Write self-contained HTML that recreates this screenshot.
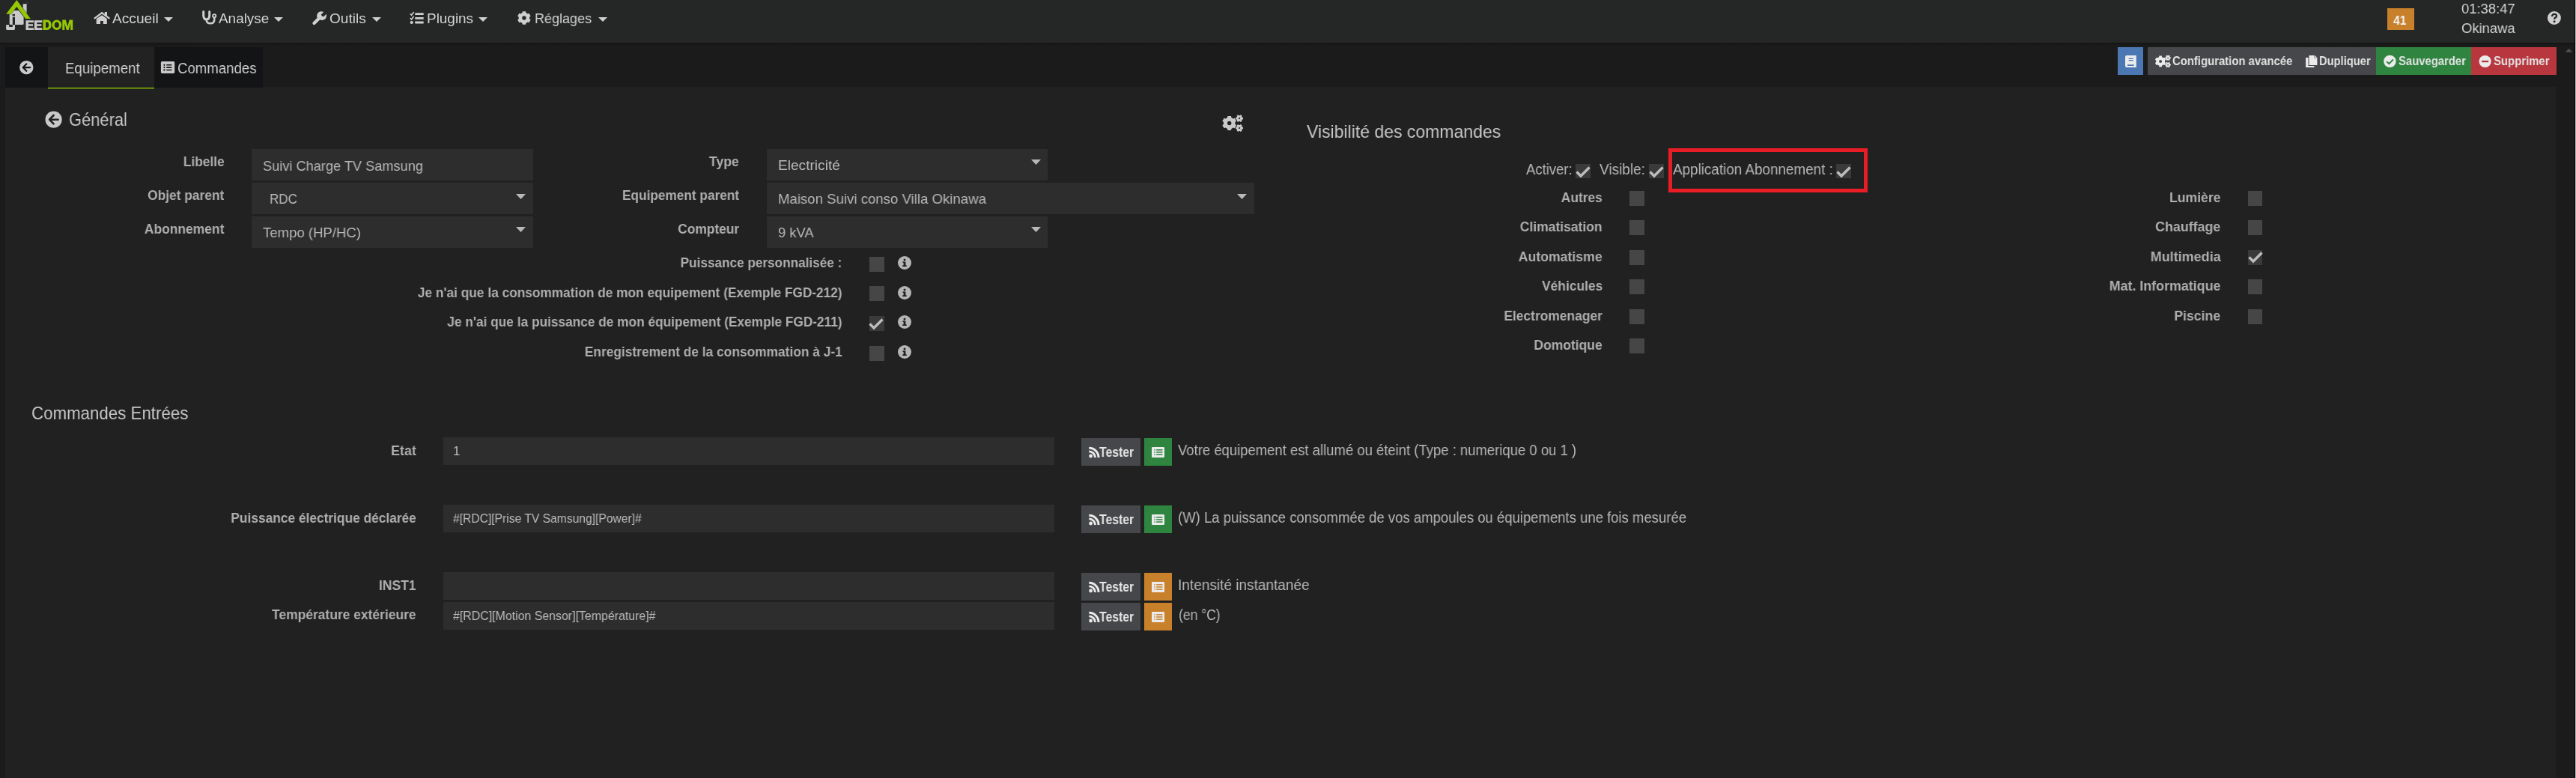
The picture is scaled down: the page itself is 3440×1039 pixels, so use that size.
<!DOCTYPE html>
<html><head><meta charset="utf-8"><style>
html,body{margin:0;padding:0;}
body{width:3440px;height:1039px;overflow:hidden;background:#1b1b1b;position:relative;font-family:"Liberation Sans",sans-serif;}
.t{position:absolute;white-space:nowrap;line-height:1;will-change:transform;}
.b{position:absolute;}
</style></head><body>
<div class="b" style="left:0px;top:0px;width:3440px;height:57px;background:#252626;"></div>
<div class="b" style="left:0px;top:57px;width:3440px;height:4px;background:linear-gradient(#141414,#1b1b1b);"></div>
<div class="b" style="left:7px;top:116px;width:3406px;height:923px;background:#212121;"></div>
<div class="b" style="left:7px;top:63px;width:57px;height:54px;background:#131416;"></div>
<div class="b" style="left:64px;top:63px;width:142px;height:54px;background:#222222;"></div>
<div class="b" style="left:64px;top:117px;width:142px;height:1px;background:#94ca02;"></div>
<div class="b" style="left:64px;top:118px;width:142px;height:1px;background:rgba(148,202,2,0.35);"></div>
<div class="b" style="left:206px;top:63px;width:145px;height:54px;background:#131416;"></div>
<div class="b" style="left:3438px;top:0px;width:1px;height:1039px;background:#000;"></div>
<div class="b" style="left:3439px;top:0px;width:1px;height:1039px;background:#bdbdbd;"></div>
<div class="b" style="left:2828px;top:63px;width:34px;height:37px;background:#4b78b3;"></div>
<div class="b" style="left:2868px;top:63px;width:305px;height:37px;background:#46474a;"></div>
<div class="b" style="left:3173px;top:63px;width:127px;height:37px;background:#2f8440;"></div>
<div class="b" style="left:3300px;top:63px;width:114px;height:37px;background:#b8373e;"></div>
<div class="b" style="left:3188px;top:11px;width:36px;height:29px;background:#c8802b;"></div>
<div class="b" style="left:336px;top:199px;width:376px;height:42px;background:#2d2d2d;"></div>
<div class="b" style="left:336px;top:244px;width:376px;height:42px;background:#2d2d2d;"></div>
<div class="b" style="left:336px;top:289px;width:376px;height:42px;background:#2d2d2d;"></div>
<div class="b" style="left:1024px;top:199px;width:375px;height:42px;background:#2d2d2d;"></div>
<div class="b" style="left:1024px;top:244px;width:651px;height:42px;background:#2d2d2d;"></div>
<div class="b" style="left:1024px;top:289px;width:375px;height:42px;background:#2d2d2d;"></div>
<div class="b" style="left:1161px;top:343px;width:20px;height:20px;background:#464646;"></div>
<div class="b" style="left:1161px;top:382px;width:20px;height:20px;background:#464646;"></div>
<div class="b" style="left:1161px;top:422px;width:20px;height:20px;background:#3a3a3a;"></div>
<div class="b" style="left:1161px;top:462px;width:20px;height:20px;background:#464646;"></div>
<div class="b" style="left:2104px;top:219px;width:20px;height:19px;background:#3a3a3a;"></div>
<div class="b" style="left:2202px;top:219px;width:20px;height:19px;background:#3a3a3a;"></div>
<div class="b" style="left:2452px;top:219px;width:20px;height:19px;background:#3a3a3a;"></div>
<div class="b" style="left:2176px;top:255px;width:20px;height:20px;background:#464646;"></div>
<div class="b" style="left:2176px;top:294px;width:20px;height:20px;background:#464646;"></div>
<div class="b" style="left:2176px;top:334px;width:20px;height:20px;background:#464646;"></div>
<div class="b" style="left:2176px;top:373px;width:20px;height:20px;background:#464646;"></div>
<div class="b" style="left:2176px;top:413px;width:20px;height:20px;background:#464646;"></div>
<div class="b" style="left:2176px;top:452px;width:20px;height:20px;background:#464646;"></div>
<div class="b" style="left:3002px;top:255px;width:19px;height:20px;background:#464646;"></div>
<div class="b" style="left:3002px;top:294px;width:19px;height:20px;background:#464646;"></div>
<div class="b" style="left:3002px;top:334px;width:19px;height:20px;background:#3a3a3a;"></div>
<div class="b" style="left:3002px;top:373px;width:19px;height:20px;background:#464646;"></div>
<div class="b" style="left:3002px;top:413px;width:19px;height:20px;background:#464646;"></div>
<div class="b" style="left:2228px;top:198px;width:256px;height:49px;border:5px solid #e81d25"></div>
<div class="b" style="left:592px;top:584px;width:816px;height:37px;background:#2d2d2d;"></div>
<div class="b" style="left:592px;top:674px;width:816px;height:37px;background:#2d2d2d;"></div>
<div class="b" style="left:592px;top:764px;width:816px;height:37px;background:#2d2d2d;"></div>
<div class="b" style="left:592px;top:804px;width:816px;height:37px;background:#2d2d2d;"></div>
<div class="b" style="left:1444px;top:585px;width:79px;height:37px;background:#46474a;"></div>
<div class="b" style="left:1528px;top:585px;width:37px;height:37px;background:#2f8440;"></div>
<div class="b" style="left:1444px;top:675px;width:79px;height:37px;background:#46474a;"></div>
<div class="b" style="left:1528px;top:675px;width:37px;height:37px;background:#2f8440;"></div>
<div class="b" style="left:1444px;top:765px;width:79px;height:37px;background:#46474a;"></div>
<div class="b" style="left:1528px;top:765px;width:37px;height:37px;background:#c8802b;"></div>
<div class="b" style="left:1444px;top:805px;width:79px;height:37px;background:#46474a;"></div>
<div class="b" style="left:1528px;top:805px;width:37px;height:37px;background:#c8802b;"></div>
<svg class="b" style="left:219px;top:23px;" width="12" height="6" viewBox="0 0 12 6"><path d="M0 0H12L6.0 6Z" fill="#cfcfcf"/></svg>
<svg class="b" style="left:366px;top:23px;" width="12" height="6" viewBox="0 0 12 6"><path d="M0 0H12L6.0 6Z" fill="#cfcfcf"/></svg>
<svg class="b" style="left:497px;top:23px;" width="12" height="6" viewBox="0 0 12 6"><path d="M0 0H12L6.0 6Z" fill="#cfcfcf"/></svg>
<svg class="b" style="left:639px;top:23px;" width="12" height="6" viewBox="0 0 12 6"><path d="M0 0H12L6.0 6Z" fill="#cfcfcf"/></svg>
<svg class="b" style="left:798.5px;top:23px;" width="12.0" height="6" viewBox="0 0 12.0 6"><path d="M0 0H12.0L6.0 6Z" fill="#cfcfcf"/></svg>
<svg class="b" style="left:689px;top:259px;" width="13" height="7" viewBox="0 0 13 7"><path d="M0 0H13L6.5 7Z" fill="#b8b8b8"/></svg>
<svg class="b" style="left:689px;top:303px;" width="13" height="7" viewBox="0 0 13 7"><path d="M0 0H13L6.5 7Z" fill="#b8b8b8"/></svg>
<svg class="b" style="left:1377px;top:213px;" width="13" height="7" viewBox="0 0 13 7"><path d="M0 0H13L6.5 7Z" fill="#b8b8b8"/></svg>
<svg class="b" style="left:1652px;top:259px;" width="13" height="7" viewBox="0 0 13 7"><path d="M0 0H13L6.5 7Z" fill="#b8b8b8"/></svg>
<svg class="b" style="left:1377px;top:302.5px;" width="13" height="7.0" viewBox="0 0 13 7.0"><path d="M0 0H13L6.5 7.0Z" fill="#b8b8b8"/></svg>
<svg class="b" style="left:1160px;top:422px;" width="20" height="20" viewBox="0 0 20 20"><path d="M1.5 10.5L7 16L18.5 4.5" stroke="#bdbdbd" stroke-width="3.4" fill="none"/></svg>
<svg class="b" style="left:2104px;top:219px;" width="20" height="20" viewBox="0 0 20 20"><path d="M1.5 10.5L7 16L18.5 4.5" stroke="#bdbdbd" stroke-width="3.4" fill="none"/></svg>
<svg class="b" style="left:2202px;top:219px;" width="20" height="20" viewBox="0 0 20 20"><path d="M1.5 10.5L7 16L18.5 4.5" stroke="#bdbdbd" stroke-width="3.4" fill="none"/></svg>
<svg class="b" style="left:2452px;top:219px;" width="20" height="20" viewBox="0 0 20 20"><path d="M1.5 10.5L7 16L18.5 4.5" stroke="#bdbdbd" stroke-width="3.4" fill="none"/></svg>
<svg class="b" style="left:3002px;top:333px;" width="20" height="20" viewBox="0 0 20 20"><path d="M1.5 10.5L7 16L18.5 4.5" stroke="#bdbdbd" stroke-width="3.4" fill="none"/></svg>
<svg class="b" style="left:1198.5px;top:342.3px;" width="18" height="18" viewBox="0 0 18 18"><circle cx="9" cy="9" r="9" fill="#b5b5b5"/><rect x="7.6" y="7.5" width="2.8" height="6.5" fill="#222"/><rect x="6.3" y="12.3" width="5.4" height="1.7" fill="#222"/><rect x="6.5" y="7.5" width="2" height="1.5" fill="#222"/><circle cx="9" cy="5" r="1.5" fill="#222"/></svg>
<svg class="b" style="left:1198.5px;top:381.8px;" width="18" height="18" viewBox="0 0 18 18"><circle cx="9" cy="9" r="9" fill="#b5b5b5"/><rect x="7.6" y="7.5" width="2.8" height="6.5" fill="#222"/><rect x="6.3" y="12.3" width="5.4" height="1.7" fill="#222"/><rect x="6.5" y="7.5" width="2" height="1.5" fill="#222"/><circle cx="9" cy="5" r="1.5" fill="#222"/></svg>
<svg class="b" style="left:1198.5px;top:421.3px;" width="18" height="18" viewBox="0 0 18 18"><circle cx="9" cy="9" r="9" fill="#b5b5b5"/><rect x="7.6" y="7.5" width="2.8" height="6.5" fill="#222"/><rect x="6.3" y="12.3" width="5.4" height="1.7" fill="#222"/><rect x="6.5" y="7.5" width="2" height="1.5" fill="#222"/><circle cx="9" cy="5" r="1.5" fill="#222"/></svg>
<svg class="b" style="left:1198.5px;top:460.8px;" width="18" height="18" viewBox="0 0 18 18"><circle cx="9" cy="9" r="9" fill="#b5b5b5"/><rect x="7.6" y="7.5" width="2.8" height="6.5" fill="#222"/><rect x="6.3" y="12.3" width="5.4" height="1.7" fill="#222"/><rect x="6.5" y="7.5" width="2" height="1.5" fill="#222"/><circle cx="9" cy="5" r="1.5" fill="#222"/></svg><svg class="b" style="left:0;top:0" width="3440" height="1039"><rect x="30.7" y="5.2" width="4.9" height="12" fill="#c9c9c9"/>
<path d="M12.7 15.5 Q12.7 13.9 14.3 13.9 H25 L31.6 22.5 V31.4 Q31.6 33 30 33 H14.3 Q12.7 33 12.7 31.4Z" fill="#c9c9c9"/>
<path d="M8.1 18.8 L22.3 0 L40.8 24.9 L34.1 24.9 L22.3 9 L14.7 18.8Z" fill="#94c802" stroke="#252626" stroke-width="0.7" paint-order="stroke"/>
<rect x="16.6" y="18.9" width="3.4" height="2.4" fill="#252626"/>
<rect x="16.8" y="22.8" width="3.2" height="11.5" fill="#252626"/>
<path d="M8.1 33.3 H12.2 V35.9 H16.8 V33.3 H20 V38.6 Q20 39.9 18.7 39.9 H9.4 Q8.1 39.9 8.1 38.6Z" fill="#c9c9c9"/>
<path d="M34.5 27.2 H45.0 V29.9 H37.9 V32.2 H44.0 V34.8 H37.9 V37.2 H45.0 V39.9 H34.5Z" fill="#c9c9c9"/>
<path d="M45.9 27.2 H56.4 V29.9 H49.3 V32.2 H55.4 V34.8 H49.3 V37.2 H56.4 V39.9 H45.9Z" fill="#c9c9c9"/>
<path fill-rule="evenodd" d="M57.5 26.6 H62.6 Q68.6 26.6 68.6 33.3 Q68.6 40 62.6 40 H57.5Z M61 29.5 H62.4 Q65.1 29.5 65.1 33.3 Q65.1 37.1 62.4 37.1 H61Z" fill="#94c802"/>
<path fill-rule="evenodd" d="M75.8 26.4 A6.4 6.85 0 1 1 75.8 40.1 A6.4 6.85 0 1 1 75.8 26.4Z M75.8 29.4 A3.1 3.85 0 1 0 75.8 37.1 A3.1 3.85 0 1 0 75.8 29.4Z" fill="#94c802"/>
<path d="M83.3 40 V26.6 H87.8 L90.25 35.2 L92.7 26.6 H97.2 V40 H94.2 V31.2 L91.6 40 H88.9 L86.3 31.2 V40Z" fill="#94c802"/>
<path d="M35.3 2 L37.6 4.2 L36.6 5" stroke="#555" stroke-width="0.8" fill="none"/>
<path d="M125.8 24.9 L136.1 17.1 L146.4 24.9" stroke="#cfcfcf" stroke-width="2.3" fill="none" stroke-linejoin="miter"/>
<rect x="139.8" y="16" width="3.2" height="5.2" fill="#cfcfcf"/>
<path d="M128.7 25.1 L136.1 20.2 L142.8 25.1 V32.1 H137.9 V27.9 H134 V32.1 H128.7Z" fill="#cfcfcf"/>
<path d="M271.7 15.6 V20.6 Q271.7 25.9 275.7 25.9 Q279.7 25.9 279.7 20.6 V15.6" stroke="#cfcfcf" stroke-width="3" fill="none" stroke-linecap="round"/>
<path d="M275.7 25.5 V26.5 Q275.7 31.3 280.9 31.3 Q286.2 31.3 286.2 26.5 V23.3" stroke="#cfcfcf" stroke-width="2.6" fill="none"/>
<circle cx="286.2" cy="21.2" r="2.1" stroke="#cfcfcf" stroke-width="1.9" fill="none"/>
<path d="M419.5 31 L427 23.5" stroke="#cfcfcf" stroke-width="4.4" stroke-linecap="round"/>
<path d="M425.8 26.2 A6 6 0 0 1 430.5 15.4 L432.3 15.9 L428.8 19.5 L429.9 21.5 L432.3 22.3 L435.7 18.8 Q436.5 21.5 435.3 24 A6 6 0 0 1 428.6 26.8Z" fill="#cfcfcf"/>
<rect x="554.2" y="17.15" width="11.5" height="2.9" rx="0.6" fill="#cfcfcf"/>
<rect x="554.2" y="22.95" width="11.5" height="2.9" rx="0.6" fill="#cfcfcf"/>
<rect x="554.2" y="28.55" width="11.5" height="2.9" rx="0.6" fill="#cfcfcf"/>
<path d="M547.8 18.3 L549.5 20.2 L552.6 16.0" stroke="#cfcfcf" stroke-width="1.6" fill="none"/>
<path d="M547.8 24.1 L549.5 26.0 L552.6 21.8" stroke="#cfcfcf" stroke-width="1.6" fill="none"/>
<circle cx="549.7" cy="30" r="2.1" fill="#cfcfcf"/>
<path fill-rule="evenodd" d="M697.50 17.11 L697.73 15.16 L702.07 15.16 L702.30 17.11 L704.67 18.47 L706.47 17.70 L708.64 21.46 L707.07 22.63 L707.07 25.37 L708.64 26.54 L706.47 30.30 L704.67 29.53 L702.30 30.89 L702.07 32.84 L697.73 32.84 L697.50 30.89 L695.13 29.53 L693.33 30.30 L691.16 26.54 L692.73 25.37 L692.73 22.63 L691.16 21.46 L693.33 17.70 L695.13 18.47Z M702.60 24.00 A2.7 2.7 0 1 0 697.20 24.00 A2.7 2.7 0 1 0 702.60 24.00Z" fill="#cfcfcf"/>
<circle cx="3410.9" cy="24" r="9" fill="#cfcfcf"/>
<path d="M3408 22 Q3408.2 18.8 3411.2 18.8 Q3414.1 18.8 3414.1 21.2 Q3414.1 22.7 3412.3 23.6 Q3411.1 24.3 3411.1 25.8" stroke="#252626" stroke-width="2.3" fill="none"/>
<circle cx="3411.1" cy="28.7" r="1.5" fill="#252626"/>
<circle cx="35.3" cy="90.1" r="9.2" fill="#c9c9c9"/>
<path d="M35.3 85.4 L30.7 90.1 L35.3 94.8 M30.9 90.1 H40.3" stroke="#131416" stroke-width="2.2" fill="none" stroke-linecap="round" stroke-linejoin="round"/>
<rect x="214.9" y="81.9" width="18.3" height="16" rx="1.6" fill="#c9c9c9"/>
<circle cx="219.4" cy="86.8" r="1.15" fill="#131416"/>
<rect x="222.2" y="86.0" width="7.2" height="1.6" rx="0.4" fill="#131416"/>
<circle cx="219.4" cy="90.1" r="1.15" fill="#131416"/>
<rect x="222.2" y="89.3" width="7.2" height="1.6" rx="0.4" fill="#131416"/>
<circle cx="219.4" cy="93.5" r="1.15" fill="#131416"/>
<rect x="222.2" y="92.7" width="7.2" height="1.6" rx="0.4" fill="#131416"/>
<circle cx="71.6" cy="159.7" r="11.1" fill="#c9c9c9"/>
<path d="M71.6 154 L66 159.7 L71.6 165.4 M66.3 159.7 H77.6" stroke="#212121" stroke-width="2.6" fill="none" stroke-linecap="round" stroke-linejoin="round"/>
<path fill-rule="evenodd" d="M1639.10 157.04 L1639.36 154.98 L1644.04 154.98 L1644.30 157.04 L1646.86 158.52 L1648.77 157.72 L1651.11 161.77 L1649.46 163.02 L1649.46 165.98 L1651.11 167.23 L1648.77 171.28 L1646.86 170.48 L1644.30 171.96 L1644.04 174.02 L1639.36 174.02 L1639.10 171.96 L1636.54 170.48 L1634.63 171.28 L1632.29 167.23 L1633.94 165.98 L1633.94 163.02 L1632.29 161.77 L1634.63 157.72 L1636.54 158.52Z M1644.40 164.50 A2.7 2.7 0 1 0 1639.00 164.50 A2.7 2.7 0 1 0 1644.40 164.50Z" fill="#c9c9c9"/>
<path fill-rule="evenodd" d="M1655.87 154.17 L1656.55 153.21 L1658.61 154.40 L1658.11 155.47 L1658.88 156.80 L1660.06 156.91 L1660.06 159.29 L1658.88 159.40 L1658.11 160.73 L1658.61 161.80 L1656.55 162.99 L1655.87 162.03 L1654.33 162.03 L1653.65 162.99 L1651.59 161.80 L1652.09 160.73 L1651.32 159.40 L1650.14 159.29 L1650.14 156.91 L1651.32 156.80 L1652.09 155.47 L1651.59 154.40 L1653.65 153.21 L1654.33 154.17Z M1656.20 158.10 A1.1 1.1 0 1 0 1654.00 158.10 A1.1 1.1 0 1 0 1656.20 158.10Z" fill="#c9c9c9"/>
<path fill-rule="evenodd" d="M1655.87 167.07 L1656.55 166.11 L1658.61 167.30 L1658.11 168.37 L1658.88 169.70 L1660.06 169.81 L1660.06 172.19 L1658.88 172.30 L1658.11 173.63 L1658.61 174.70 L1656.55 175.89 L1655.87 174.93 L1654.33 174.93 L1653.65 175.89 L1651.59 174.70 L1652.09 173.63 L1651.32 172.30 L1650.14 172.19 L1650.14 169.81 L1651.32 169.70 L1652.09 168.37 L1651.59 167.30 L1653.65 166.11 L1654.33 167.07Z M1656.20 171.00 A1.1 1.1 0 1 0 1654.00 171.00 A1.1 1.1 0 1 0 1656.20 171.00Z" fill="#c9c9c9"/>
<path d="M2840 74 H2852.8 V89.9 H2840 Q2838 89.9 2838 88 V76 Q2838 74 2840 74Z" fill="#ebebeb"/>
<rect x="2842.5" y="77.8" width="6.5" height="1.3" rx="0.6" fill="#4b78b3"/>
<rect x="2842.5" y="79.9" width="6.5" height="1.3" rx="0.6" fill="#4b78b3"/>
<rect x="2840.8" y="86.2" width="9.1" height="1.7" rx="0.8" fill="#4b78b3"/>
<path fill-rule="evenodd" d="M2883.13 76.23 L2883.31 74.62 L2886.89 74.62 L2887.07 76.23 L2889.02 77.36 L2890.51 76.71 L2892.30 79.81 L2890.99 80.78 L2890.99 83.02 L2892.30 83.99 L2890.51 87.09 L2889.02 86.44 L2887.07 87.57 L2886.89 89.18 L2883.31 89.18 L2883.13 87.57 L2881.18 86.44 L2879.69 87.09 L2877.90 83.99 L2879.21 83.02 L2879.21 80.78 L2877.90 79.81 L2879.69 76.71 L2881.18 77.36Z M2887.10 81.90 A2.0 2.0 0 1 0 2883.10 81.90 A2.0 2.0 0 1 0 2887.10 81.90Z" fill="#ebebeb"/>
<path fill-rule="evenodd" d="M2895.68 74.36 L2896.21 73.56 L2897.78 74.47 L2897.36 75.33 L2897.94 76.33 L2898.89 76.39 L2898.89 78.21 L2897.94 78.27 L2897.36 79.27 L2897.78 80.13 L2896.21 81.04 L2895.68 80.24 L2894.52 80.24 L2893.99 81.04 L2892.42 80.13 L2892.84 79.27 L2892.26 78.27 L2891.31 78.21 L2891.31 76.39 L2892.26 76.33 L2892.84 75.33 L2892.42 74.47 L2893.99 73.56 L2894.52 74.36Z M2896.00 77.30 A0.9 0.9 0 1 0 2894.20 77.30 A0.9 0.9 0 1 0 2896.00 77.30Z" fill="#ebebeb"/>
<path fill-rule="evenodd" d="M2895.68 83.66 L2896.21 82.86 L2897.78 83.77 L2897.36 84.63 L2897.94 85.63 L2898.89 85.69 L2898.89 87.51 L2897.94 87.57 L2897.36 88.57 L2897.78 89.43 L2896.21 90.34 L2895.68 89.54 L2894.52 89.54 L2893.99 90.34 L2892.42 89.43 L2892.84 88.57 L2892.26 87.57 L2891.31 87.51 L2891.31 85.69 L2892.26 85.63 L2892.84 84.63 L2892.42 83.77 L2893.99 82.86 L2894.52 83.66Z M2896.00 86.60 A0.9 0.9 0 1 0 2894.20 86.60 A0.9 0.9 0 1 0 2896.00 86.60Z" fill="#ebebeb"/>
<path d="M3079.1 76.9 H3082.5 V88 H3090.4 V89.9 H3079.1Z" fill="#ebebeb"/>
<path d="M3083.5 74 H3090.6 V77.6 H3094.4 V87.1 H3083.5Z" fill="#ebebeb"/>
<path d="M3091.4 74 L3094.4 76.9 H3091.4Z" fill="#ebebeb"/>
<circle cx="3191.4" cy="81.9" r="8.2" fill="#ebebeb"/>
<path d="M3187.2 82.2 L3190.4 85.2 L3195.9 79.4" stroke="#2f8440" stroke-width="2" fill="none"/>
<circle cx="3318.6" cy="82" r="8.1" fill="#ebebeb"/>
<rect x="3314" y="80.9" width="9.2" height="2.3" fill="#b8373e"/>
<path d="M3425.6 69.8 L3430.5 64.7 L3435.5 69.8Z" fill="#505050"/>
<path d="M1454.3 601.4 A9.6 9.6 0 0 1 1463.9 611.0 H1461.1 A6.8 6.8 0 0 0 1454.3 604.2Z" fill="#ebebeb"/>
<path d="M1454.3 596.8 A14.2 14.2 0 0 1 1468.5 611.0 H1465.5 A11.2 11.2 0 0 0 1454.3 599.8Z" fill="#ebebeb"/>
<circle cx="1456.6" cy="609" r="2.4" fill="#ebebeb"/>
<rect x="1538" y="597" width="17" height="14" rx="1.2" fill="#ebebeb"/>
<rect x="1541.3" y="600.1" width="1.5" height="1.5" fill="#2f8440"/>
<rect x="1544.2" y="600.1" width="8.3" height="1.5" fill="#2f8440"/>
<rect x="1541.3" y="603.2" width="1.5" height="1.5" fill="#2f8440"/>
<rect x="1544.2" y="603.2" width="8.3" height="1.5" fill="#2f8440"/>
<rect x="1541.3" y="606.3" width="1.5" height="1.5" fill="#2f8440"/>
<rect x="1544.2" y="606.3" width="8.3" height="1.5" fill="#2f8440"/>
<path d="M1454.3 691.4 A9.6 9.6 0 0 1 1463.9 701.0 H1461.1 A6.8 6.8 0 0 0 1454.3 694.2Z" fill="#ebebeb"/>
<path d="M1454.3 686.8 A14.2 14.2 0 0 1 1468.5 701.0 H1465.5 A11.2 11.2 0 0 0 1454.3 689.8Z" fill="#ebebeb"/>
<circle cx="1456.6" cy="699" r="2.4" fill="#ebebeb"/>
<rect x="1538" y="687" width="17" height="14" rx="1.2" fill="#ebebeb"/>
<rect x="1541.3" y="690.1" width="1.5" height="1.5" fill="#2f8440"/>
<rect x="1544.2" y="690.1" width="8.3" height="1.5" fill="#2f8440"/>
<rect x="1541.3" y="693.2" width="1.5" height="1.5" fill="#2f8440"/>
<rect x="1544.2" y="693.2" width="8.3" height="1.5" fill="#2f8440"/>
<rect x="1541.3" y="696.3" width="1.5" height="1.5" fill="#2f8440"/>
<rect x="1544.2" y="696.3" width="8.3" height="1.5" fill="#2f8440"/>
<path d="M1454.3 781.4 A9.6 9.6 0 0 1 1463.9 791.0 H1461.1 A6.8 6.8 0 0 0 1454.3 784.2Z" fill="#ebebeb"/>
<path d="M1454.3 776.8 A14.2 14.2 0 0 1 1468.5 791.0 H1465.5 A11.2 11.2 0 0 0 1454.3 779.8Z" fill="#ebebeb"/>
<circle cx="1456.6" cy="789" r="2.4" fill="#ebebeb"/>
<rect x="1538" y="777" width="17" height="14" rx="1.2" fill="#ebebeb"/>
<rect x="1541.3" y="780.1" width="1.5" height="1.5" fill="#c8802b"/>
<rect x="1544.2" y="780.1" width="8.3" height="1.5" fill="#c8802b"/>
<rect x="1541.3" y="783.2" width="1.5" height="1.5" fill="#c8802b"/>
<rect x="1544.2" y="783.2" width="8.3" height="1.5" fill="#c8802b"/>
<rect x="1541.3" y="786.3" width="1.5" height="1.5" fill="#c8802b"/>
<rect x="1544.2" y="786.3" width="8.3" height="1.5" fill="#c8802b"/>
<path d="M1454.3 821.4 A9.6 9.6 0 0 1 1463.9 831.0 H1461.1 A6.8 6.8 0 0 0 1454.3 824.2Z" fill="#ebebeb"/>
<path d="M1454.3 816.8 A14.2 14.2 0 0 1 1468.5 831.0 H1465.5 A11.2 11.2 0 0 0 1454.3 819.8Z" fill="#ebebeb"/>
<circle cx="1456.6" cy="829" r="2.4" fill="#ebebeb"/>
<rect x="1538" y="817" width="17" height="14" rx="1.2" fill="#ebebeb"/>
<rect x="1541.3" y="820.1" width="1.5" height="1.5" fill="#c8802b"/>
<rect x="1544.2" y="820.1" width="8.3" height="1.5" fill="#c8802b"/>
<rect x="1541.3" y="823.2" width="1.5" height="1.5" fill="#c8802b"/>
<rect x="1544.2" y="823.2" width="8.3" height="1.5" fill="#c8802b"/>
<rect x="1541.3" y="826.3" width="1.5" height="1.5" fill="#c8802b"/>
<rect x="1544.2" y="826.3" width="8.3" height="1.5" fill="#c8802b"/></svg>
<div class="t" style="left:150.04px;top:15.64px;font-size:18.5px;font-weight:400;color:#d4d4d4;transform:scaleX(1.0349);transform-origin:left">Accueil</div>
<div class="t" style="left:292.05px;top:15.64px;font-size:18.5px;font-weight:400;color:#d4d4d4;transform:scaleX(1.0224);transform-origin:left">Analyse</div>
<div class="t" style="left:440.05px;top:15.64px;font-size:18.5px;font-weight:400;color:#d4d4d4;transform:scaleX(1.0300);transform-origin:left">Outils</div>
<div class="t" style="left:569.65px;top:15.64px;font-size:18.5px;font-weight:400;color:#d4d4d4;transform:scaleX(1.0233);transform-origin:left">Plugins</div>
<div class="t" style="left:713.70px;top:15.64px;font-size:18.5px;font-weight:400;color:#d4d4d4;transform:scaleX(0.9725);transform-origin:left">Réglages</div>
<div class="t" style="left:3286.78px;top:3.30px;font-size:18.9px;font-weight:400;color:#d4d4d4;transform:scaleX(0.9743);transform-origin:left">01:38:47</div>
<div class="t" style="left:3287.08px;top:28.80px;font-size:18.9px;font-weight:400;color:#d4d4d4;transform:scaleX(0.9749);transform-origin:left">Okinawa</div>
<div class="t" style="left:3196.22px;top:19.13px;font-size:16.5px;font-weight:700;color:#f2f2f2;transform:scaleX(0.9482);transform-origin:left">41</div>
<div class="t" style="left:87.07px;top:80.67px;font-size:20px;font-weight:400;color:#d0d0d0;transform:scaleX(0.9338);transform-origin:left">Equipement</div>
<div class="t" style="left:237.07px;top:80.67px;font-size:20px;font-weight:400;color:#d0d0d0;transform:scaleX(0.9302);transform-origin:left">Commandes</div>
<div class="t" style="left:2901.26px;top:73.36px;font-size:17.3px;font-weight:700;color:#e4e4e4;transform:scaleX(0.8607);transform-origin:left">Configuration avancée</div>
<div class="t" style="left:3096.96px;top:73.36px;font-size:17.3px;font-weight:700;color:#e4e4e4;transform:scaleX(0.8508);transform-origin:left">Dupliquer</div>
<div class="t" style="left:3203.06px;top:73.36px;font-size:17.3px;font-weight:700;color:#e4e4e4;transform:scaleX(0.8590);transform-origin:left">Sauvegarder</div>
<div class="t" style="left:3330.06px;top:73.36px;font-size:17.3px;font-weight:700;color:#e4e4e4;transform:scaleX(0.8612);transform-origin:left">Supprimer</div>
<div class="t" style="left:91.70px;top:148.15px;font-size:24.4px;font-weight:400;color:#c8c8c8;transform:scaleX(0.8985);transform-origin:left">Général</div>
<div class="t" style="left:1744.55px;top:164.33px;font-size:24.3px;font-weight:400;color:#c8c8c8;transform:scaleX(0.9473);transform-origin:left">Visibilité des commandes</div>
<div class="t" style="right:3140.63px;top:207.30px;font-size:18.9px;font-weight:700;color:#afafaf;transform:scaleX(0.9201);transform-origin:right">Libelle</div>
<div class="t" style="right:2453.12px;top:207.30px;font-size:18.9px;font-weight:700;color:#afafaf;transform:scaleX(0.9317);transform-origin:right">Type</div>
<div class="t" style="right:3140.63px;top:252.30px;font-size:18.9px;font-weight:700;color:#afafaf;transform:scaleX(0.9182);transform-origin:right">Objet parent</div>
<div class="t" style="right:2453.14px;top:252.30px;font-size:18.9px;font-weight:700;color:#afafaf;transform:scaleX(0.9127);transform-origin:right">Equipement parent</div>
<div class="t" style="right:3140.63px;top:297.30px;font-size:18.9px;font-weight:700;color:#afafaf;transform:scaleX(0.9239);transform-origin:right">Abonnement</div>
<div class="t" style="right:2453.13px;top:297.30px;font-size:18.9px;font-weight:700;color:#afafaf;transform:scaleX(0.9198);transform-origin:right">Compteur</div>
<div class="t" style="left:351.09px;top:211.62px;font-size:19px;font-weight:400;color:#b9b9b9;transform:scaleX(0.9570);transform-origin:left">Suivi Charge TV Samsung</div>
<div class="t" style="left:360.15px;top:256.12px;font-size:19px;font-weight:400;color:#b9b9b9;transform:scaleX(0.8945);transform-origin:left">RDC</div>
<div class="t" style="left:351.07px;top:300.82px;font-size:19px;font-weight:400;color:#b9b9b9;transform:scaleX(0.9768);transform-origin:left">Tempo (HP/HC)</div>
<div class="t" style="left:1038.74px;top:211.22px;font-size:19px;font-weight:400;color:#b9b9b9;transform:scaleX(1.0056);transform-origin:left">Electricité</div>
<div class="t" style="left:1038.77px;top:256.12px;font-size:19px;font-weight:400;color:#b9b9b9;transform:scaleX(0.9797);transform-origin:left">Maison Suivi conso Villa Okinawa</div>
<div class="t" style="left:1038.78px;top:300.82px;font-size:19px;font-weight:400;color:#b9b9b9;transform:scaleX(0.9691);transform-origin:left">9 kVA</div>
<div class="t" style="right:2315.44px;top:342.30px;font-size:18.9px;font-weight:700;color:#afafaf;transform:scaleX(0.9088);transform-origin:right">Puissance personnalisée :</div>
<div class="t" style="right:2315.44px;top:381.80px;font-size:18.9px;font-weight:700;color:#afafaf;transform:scaleX(0.9147);transform-origin:right">Je n'ai que la consommation de mon equipement (Exemple FGD-212)</div>
<div class="t" style="right:2315.44px;top:421.30px;font-size:18.9px;font-weight:700;color:#afafaf;transform:scaleX(0.9145);transform-origin:right">Je n'ai que la puissance de mon équipement (Exemple FGD-211)</div>
<div class="t" style="right:2315.43px;top:460.80px;font-size:18.9px;font-weight:700;color:#afafaf;transform:scaleX(0.9178);transform-origin:right">Enregistrement de la consommation à J-1</div>
<div class="t" style="left:2038.08px;top:216.99px;font-size:19.5px;font-weight:400;color:#b9b9b9;transform:scaleX(0.9485);transform-origin:left">Activer:</div>
<div class="t" style="left:2136.45px;top:216.99px;font-size:19.5px;font-weight:400;color:#b9b9b9;transform:scaleX(0.9743);transform-origin:left">Visible:</div>
<div class="t" style="left:2233.66px;top:216.99px;font-size:19.5px;font-weight:400;color:#b9b9b9;transform:scaleX(0.9667);transform-origin:left">Application Abonnement :</div>
<div class="t" style="right:1299.93px;top:255.00px;font-size:18.9px;font-weight:700;color:#afafaf;transform:scaleX(0.9219);transform-origin:right">Autres</div>
<div class="t" style="right:1299.92px;top:294.40px;font-size:18.9px;font-weight:700;color:#afafaf;transform:scaleX(0.9271);transform-origin:right">Climatisation</div>
<div class="t" style="right:1299.92px;top:333.80px;font-size:18.9px;font-weight:700;color:#afafaf;transform:scaleX(0.9358);transform-origin:right">Automatisme</div>
<div class="t" style="right:1299.93px;top:373.20px;font-size:18.9px;font-weight:700;color:#afafaf;transform:scaleX(0.9202);transform-origin:right">Véhicules</div>
<div class="t" style="right:1299.93px;top:412.60px;font-size:18.9px;font-weight:700;color:#afafaf;transform:scaleX(0.9199);transform-origin:right">Electromenager</div>
<div class="t" style="right:1299.93px;top:452.00px;font-size:18.9px;font-weight:700;color:#afafaf;transform:scaleX(0.9252);transform-origin:right">Domotique</div>
<div class="t" style="right:474.42px;top:255.00px;font-size:18.9px;font-weight:700;color:#afafaf;transform:scaleX(0.9318);transform-origin:right">Lumière</div>
<div class="t" style="right:474.41px;top:294.40px;font-size:18.9px;font-weight:700;color:#afafaf;transform:scaleX(0.9453);transform-origin:right">Chauffage</div>
<div class="t" style="right:474.40px;top:333.80px;font-size:18.9px;font-weight:700;color:#afafaf;transform:scaleX(0.9518);transform-origin:right">Multimedia</div>
<div class="t" style="right:474.41px;top:373.20px;font-size:18.9px;font-weight:700;color:#afafaf;transform:scaleX(0.9445);transform-origin:right">Mat. Informatique</div>
<div class="t" style="right:474.42px;top:412.60px;font-size:18.9px;font-weight:700;color:#afafaf;transform:scaleX(0.9340);transform-origin:right">Piscine</div>
<div class="t" style="left:41.59px;top:539.55px;font-size:23.8px;font-weight:400;color:#c8c8c8;transform:scaleX(0.9364);transform-origin:left">Commandes Entrées</div>
<div class="t" style="right:2884.61px;top:592.60px;font-size:18.9px;font-weight:700;color:#afafaf;transform:scaleX(0.9416);transform-origin:right">Etat</div>
<div class="t" style="right:2884.63px;top:682.80px;font-size:18.9px;font-weight:700;color:#afafaf;transform:scaleX(0.9173);transform-origin:right">Puissance électrique déclarée</div>
<div class="t" style="right:2884.62px;top:772.50px;font-size:18.9px;font-weight:700;color:#afafaf;transform:scaleX(0.9277);transform-origin:right">INST1</div>
<div class="t" style="right:2884.63px;top:812.30px;font-size:18.9px;font-weight:700;color:#afafaf;transform:scaleX(0.9232);transform-origin:right">Température extérieure</div>
<div class="t" style="left:605.15px;top:594.99px;font-size:16.9px;font-weight:400;color:#bdbdbd">1</div>
<div class="t" style="left:604.62px;top:685.09px;font-size:16.9px;font-weight:400;color:#bdbdbd;transform:scaleX(0.9257);transform-origin:left">#[RDC][Prise TV Samsung][Power]#</div>
<div class="t" style="left:604.90px;top:814.59px;font-size:16.9px;font-weight:400;color:#bdbdbd;transform:scaleX(0.9417);transform-origin:left">#[RDC][Motion Sensor][Température]#</div>
<div class="t" style="left:1467.51px;top:595.16px;font-size:18px;font-weight:700;color:#e6e6e6;transform:scaleX(0.8750);transform-origin:left">Tester</div>
<div class="t" style="left:1467.51px;top:685.16px;font-size:18px;font-weight:700;color:#e6e6e6;transform:scaleX(0.8750);transform-origin:left">Tester</div>
<div class="t" style="left:1467.51px;top:775.16px;font-size:18px;font-weight:700;color:#e6e6e6;transform:scaleX(0.8750);transform-origin:left">Tester</div>
<div class="t" style="left:1467.51px;top:815.16px;font-size:18px;font-weight:700;color:#e6e6e6;transform:scaleX(0.8750);transform-origin:left">Tester</div>
<div class="t" style="left:1573.48px;top:591.96px;font-size:19.3px;font-weight:400;color:#b9b9b9;transform:scaleX(0.9583);transform-origin:left">Votre équipement est allumé ou éteint (Type : numerique 0 ou 1 )</div>
<div class="t" style="left:1573.47px;top:681.96px;font-size:19.3px;font-weight:400;color:#b9b9b9;transform:scaleX(0.9599);transform-origin:left">(W) La puissance consommée de vos ampoules ou équipements une fois mesurée</div>
<div class="t" style="left:1573.45px;top:771.66px;font-size:19.3px;font-weight:400;color:#b9b9b9;transform:scaleX(0.9869);transform-origin:left">Intensité instantanée</div>
<div class="t" style="left:1573.52px;top:811.56px;font-size:19.3px;font-weight:400;color:#b9b9b9;transform:scaleX(0.9069);transform-origin:left">(en °C)</div>
</body></html>
